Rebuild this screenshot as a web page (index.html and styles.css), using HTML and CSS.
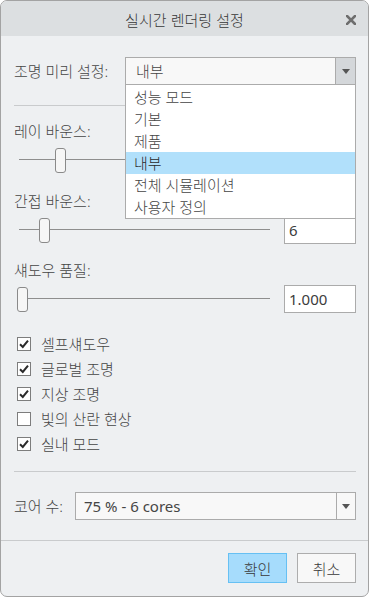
FILE: index.html
```html
<!DOCTYPE html>
<html lang="ko">
<head>
<meta charset="utf-8">
<title>실시간 렌더링 설정</title>
<link rel="stylesheet" href="styles.css">
</head>
<body>
<div class="window">
  <div class="titlebar">
    <span></span>
    <span class="title">실시간 렌더링 설정</span>
    <span class="close">
      <svg width="10" height="10" viewBox="0 0 10 10"><path d="M1 1 L9 9 M9 1 L1 9" stroke="#6e6e6e" stroke-width="2.6" stroke-linecap="square"/></svg>
    </span>
  </div>
  <div class="content">
    <div class="row preset">
      <span class="row-label preset-label">조명 미리 설정:</span>
      <div class="select select-preset">
        <span class="select-value">내부</span>
        <span class="select-btn dark"><span class="arrow"></span></span>
      </div>
      <ul class="menu">
        <li>성능 모드</li>
        <li>기본</li>
        <li>제품</li>
        <li class="active">내부</li>
        <li>전체 시뮬레이션</li>
        <li>사용자 정의</li>
      </ul>
    </div>
    <div class="sep"></div>

    <div class="label first">레이 바운스:</div>
    <div class="slider-row">
      <div class="slider"><div class="track"></div><div class="thumb" style="left:38px"></div></div>
      <div class="num">4</div>
    </div>

    <div class="label gap17">간접 바운스:</div>
    <div class="slider-row">
      <div class="slider"><div class="track"></div><div class="thumb" style="left:22px"></div></div>
      <div class="num">6</div>
    </div>

    <div class="label gap16">섀도우 품질:</div>
    <div class="slider-row">
      <div class="slider"><div class="track"></div><div class="thumb" style="left:0px"></div></div>
      <div class="num">1.000</div>
    </div>

    <div class="checks">
      <div class="check"><span class="box on"><svg width="12" height="12" viewBox="0 0 12 12"><path d="M2 6.2 L4.8 9 L10 2.6" fill="none" stroke="#2b2b2b" stroke-width="2"/></svg></span><span>셀프섀도우</span></div>
      <div class="check"><span class="box on"><svg width="12" height="12" viewBox="0 0 12 12"><path d="M2 6.2 L4.8 9 L10 2.6" fill="none" stroke="#2b2b2b" stroke-width="2"/></svg></span><span>글로벌 조명</span></div>
      <div class="check"><span class="box on"><svg width="12" height="12" viewBox="0 0 12 12"><path d="M2 6.2 L4.8 9 L10 2.6" fill="none" stroke="#2b2b2b" stroke-width="2"/></svg></span><span>지상 조명</span></div>
      <div class="check"><span class="box"></span><span>빛의 산란 현상</span></div>
      <div class="check"><span class="box on"><svg width="12" height="12" viewBox="0 0 12 12"><path d="M2 6.2 L4.8 9 L10 2.6" fill="none" stroke="#2b2b2b" stroke-width="2"/></svg></span><span>실내 모드</span></div>
    </div>
    <div class="sep sep2"></div>

    <div class="row core">
      <span class="row-label core-label">코어 수:</span>
      <div class="select select-core">
        <span class="select-value latin">75 % - 6 cores</span>
        <span class="select-btn"><span class="arrow"></span></span>
      </div>
    </div>
  </div>
  <div class="footer">
    <button class="btn primary">확인</button>
    <button class="btn">취소</button>
  </div>
</div>
</body>
</html>
```

FILE: styles.css
```css
* { box-sizing: border-box; }
html, body { margin: 0; padding: 0; background: #ffffff; }
body {
  font-family: "Noto Sans", "Noto Sans CJK KR", sans-serif;
  font-size: 15px;
  font-weight: 300;
  color: #454545;
}
.window {
  width: 369px;
  height: 597px;
  border: 1px solid #a3a3a3;
  border-radius: 7px;
  background: #eef0f2;
  overflow: hidden;
  display: flex;
  flex-direction: column;
}
.titlebar {
  height: 35px;
  flex: none;
  background: #dcdfe1;
  display: grid;
  grid-template-columns: 1fr auto 1fr;
  align-items: center;
}
.title {
  font-family: "Noto Sans CJK KR", sans-serif;
  font-size: 15px;
  color: #383838;
  line-height: 20px;
  padding-top: 2px;
}
.close {
  justify-self: end;
  margin-right: 12px;
  display: flex;
  padding-top: 3px;
}
.content {
  flex: none;
  padding: 21px 12px 20px 13px;
}
.row {
  display: flex;
  align-items: center;
  height: 28px;
  position: relative;
}
.row-label { line-height: 20px; white-space: nowrap; }
.preset-label { width: 111px; }
.core-label { width: 61px; }
.select {
  flex: 1;
  height: 28px;
  border: 1px solid #ababab;
  background: #f8f8f8;
  display: flex;
  align-items: stretch;
}
.select-value {
  flex: 1;
  line-height: 26px;
  padding-left: 10px;
}
.select-core .select-value { padding-left: 8px; }
.latin { font-family: "Noto Sans", sans-serif; font-size: 15px; font-weight: 400; }
.select-btn {
  width: 19px;
  border-left: 1px solid #ababab;
  display: flex;
  align-items: center;
  justify-content: center;
}
.select-btn.dark { background: #d4d7da; width: 20px; }
.arrow {
  width: 0; height: 0;
  border-left: 4.5px solid transparent;
  border-right: 4.5px solid transparent;
  border-top: 5px solid #555;
  margin-top: 1px;
}
.menu {
  position: absolute;
  top: 28px;
  left: 111px;
  right: 0;
  margin: 0;
  padding: 1px 0 0 0;
  list-style: none;
  background: #ffffff;
  border: 1px solid #ababab;
  border-top: none;
  z-index: 5;
}
.menu li {
  height: 22px;
  line-height: 22px;
  padding-left: 8px;
}
.menu li.active { background: #b1e0fb; color: #2a2a2a; }
.sep {
  height: 1px;
  background: #c9cbcd;
  margin-top: 20px;
}
.sep2 { margin-top: 15px; }
.label { line-height: 20px; height: 20px; margin-bottom: 5px; }
.label.first { margin-top: 15px; }
.label.gap17 { margin-top: 17px; }
.label.gap16 { margin-top: 16px; }
.slider-row {
  height: 28px;
  display: flex;
  align-items: center;
}
.slider {
  position: relative;
  margin-left: 3px;
  width: 253px;
  height: 28px;
}
.track {
  position: absolute;
  left: 2px;
  right: 0;
  top: 13px;
  height: 1px;
  background: #8e8e8e;
}
.thumb {
  position: absolute;
  top: 2px;
  width: 11px;
  height: 25px;
  border: 1px solid #8a8a8a;
  border-radius: 3px;
  background: #f6f6f6;
}
.num {
  margin-left: 14px;
  width: 72px;
  height: 28px;
  border: 1px solid #ababab;
  background: #ffffff;
  line-height: 26px;
  padding-left: 4px;
  font-family: "Noto Sans", sans-serif;
  font-weight: 400;
  color: #3c3c3c;
}
.checks { margin-top: 18px; }
.check {
  height: 25px;
  display: flex;
  align-items: center;
  padding-left: 3px;
}
.box {
  width: 14px;
  height: 14px;
  border: 1px solid #7d7d7d;
  background: #ffffff;
  margin-right: 10px;
  display: flex;
  align-items: center;
  justify-content: center;
}
.core { margin-top: 20px; }
.footer {
  flex: none;
  border-top: 1px solid #c9cbcd;
  padding: 12px 12px 0 0;
  display: flex;
  justify-content: flex-end;
  gap: 10px;
}
.btn {
  width: 59px;
  height: 30px;
  border: 1px solid #adadad;
  background: #f8f8f8;
  font-family: "Noto Sans CJK KR", sans-serif;
  font-size: 15px;
  font-weight: 300;
  color: #383838;
  padding: 0;
}
.btn.primary {
  background: #a6dcfc;
  border-color: #66c0f3;
}
```
